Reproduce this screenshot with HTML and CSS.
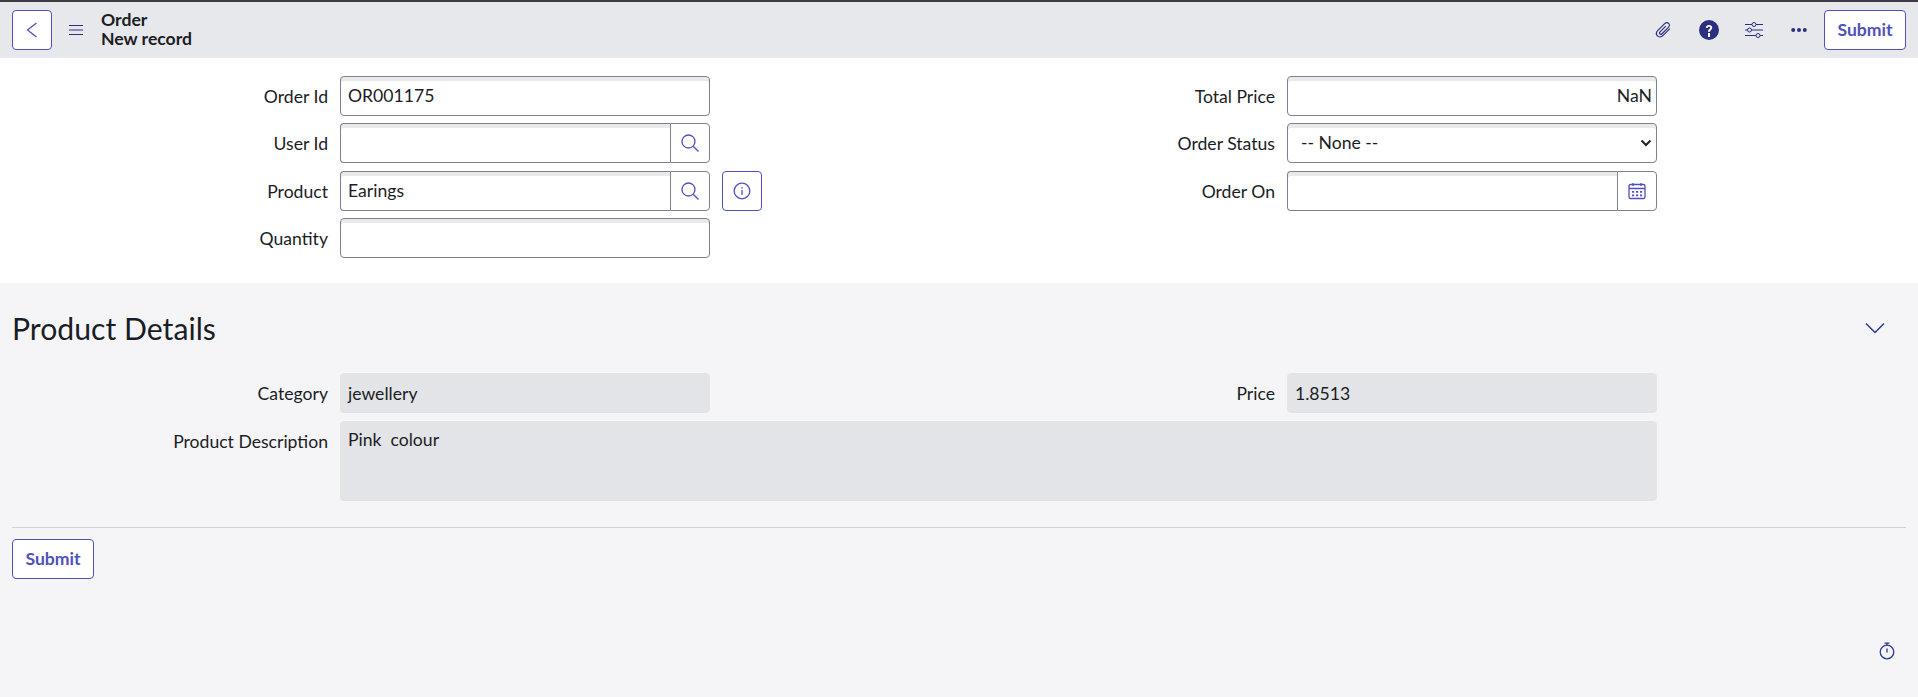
FILE: index.html
```html
<!DOCTYPE html>
<html lang="en">
<head>
<meta charset="utf-8">
<title>Order - New record</title>
<link rel="stylesheet" href="styles.css">
</head>
<body>
<header class="topbar">
  <button class="btn btn-icon" aria-label="Back">
    <svg width="14" height="20" viewBox="0 0 14 20"><path d="M11.500 3 2.500 10l9 7" class="line"/></svg>
  </button>
  <svg class="menu" width="14" height="10" viewBox="0 0 14 10"><path d="M0 .5h14M0 5h14M0 9.500h14" class="line-dark thin"/></svg>
  <div class="title"><div>Order</div><div>New record</div></div>
  <div class="actions">
    <svg class="act act-clip" width="18" height="18" viewBox="0 0 20 20"><path d="M16.500 8.500 9 16c-2 2-4.800 2-6.300.5S1.200 12.500 3.200 10.500L10.800 3c1.400-1.400 3.300-1.400 4.400-.3s1.100 3-.3 4.400L7.800 14.200c-.8.800-1.800.8-2.400.2s-.6-1.600.2-2.400L12 5.600" class="line-dark"/></svg>
    <svg class="act act-help" width="20" height="20" viewBox="0 0 20 20"><circle cx="10" cy="10" r="10" fill="#2c2e7f"/><path d="M6.800 7.700C7 5.900 8.300 5 10 5c1.900 0 3.300 1.100 3.300 2.800 0 2-2.300 2.200-2.300 4H9c0-2.800 2.200-3 2.200-4.100 0-.7-.5-1-1.200-1-.8 0-1.200.5-1.300 1.200z" fill="#fff"/><rect x="9" y="13" width="2" height="4" fill="#fff"/></svg>
    <svg class="act act-sliders" width="18" height="16" viewBox="0 0 18 16"><path d="M0 2.500h7m4 0h7M0 8h2.500m4 0H18M0 13.500h11m4 0h3" class="line-dark thin"/><circle cx="9" cy="2.500" r="2" class="line-dark thin"/><circle cx="4.500" cy="8" r="2" class="line-dark thin"/><circle cx="13" cy="13.500" r="2" class="line-dark thin"/></svg>
    <svg class="act act-more" width="16" height="4" viewBox="0 0 16 4"><circle cx="2.200" cy="2" r="2" fill="#2c2e7f"/><circle cx="8" cy="2" r="2" fill="#2c2e7f"/><circle cx="13.800" cy="2" r="2" fill="#2c2e7f"/></svg>
    <button class="btn btn-text">Submit</button>
  </div>
</header>

<section class="primary">
  <div class="form-grid">
    <div class="col">
      <div class="row"><label class="lbl">Order Id</label><div class="field"><div class="input">OR001175</div></div></div>
      <div class="row"><label class="lbl">User Id</label><div class="field">
        <div class="group"><div class="input"></div><span class="addon"><svg width="20" height="20" viewBox="0 0 20 20"><circle cx="8.500" cy="8.500" r="6.500" class="line"/><path d="m13.200 13.200 5.300 5.300" class="line"/></svg></span></div>
      </div></div>
      <div class="row"><label class="lbl">Product</label><div class="field">
        <div class="group"><div class="input">Earings</div><span class="addon"><svg width="20" height="20" viewBox="0 0 20 20"><circle cx="8.500" cy="8.500" r="6.500" class="line"/><path d="m13.200 13.200 5.300 5.300" class="line"/></svg></span></div>
        <button class="btn btn-icon btn-info" aria-label="Info"><svg width="18" height="18" viewBox="0 0 18 18"><circle cx="9" cy="9" r="7.800" class="line"/><path d="M9 8v5M9 5v1.600" class="line"/></svg></button>
      </div></div>
      <div class="row"><label class="lbl">Quantity</label><div class="field"><div class="input"></div></div></div>
    </div>
    <div class="col">
      <div class="row"><label class="lbl">Total Price</label><div class="field"><div class="input input-right">NaN</div></div></div>
      <div class="row"><label class="lbl">Order Status</label><div class="field">
        <div class="input input-select">-- None --<svg class="caret" width="12" height="8" viewBox="0 0 12 8"><path d="m1.500 1.500 4.500 4.500 4.500-4.500" fill="none" stroke="#222" stroke-width="2"/></svg></div>
      </div></div>
      <div class="row"><label class="lbl">Order On</label><div class="field">
        <div class="group"><div class="input"></div><span class="addon"><svg width="18" height="18" viewBox="0 0 18 18"><rect x="1" y="2.500" width="16" height="14" rx="1.500" class="line"/><path d="M1 6.500h16M5 1v3M13 1v3" class="line"/><path d="M4 9h2.200v1.800H4zM8 9h2.200v1.800H8zM12 9h2.200v1.800H12zM4 12.500h2.200v1.800H4zM8 12.500h2.200v1.800H8zM12 12.500h2.200v1.800H12z" fill="#4f52bd"/></svg></span></div>
      </div></div>
    </div>
  </div>
</section>

<main class="details">
  <div class="section-head">
    <h2>Product Details</h2>
    <svg width="20" height="12" viewBox="0 0 20 12"><path d="m1 1.500 9 9 9-9" fill="none" stroke="#2c3a8f" stroke-width="1.500"/></svg>
  </div>
  <div class="form-grid">
    <div class="col">
      <div class="row"><label class="lbl">Category</label><div class="field"><div class="input readonly">jewellery</div></div></div>
    </div>
    <div class="col">
      <div class="row"><label class="lbl">Price</label><div class="field"><div class="input readonly">1.8513</div></div></div>
    </div>
  </div>
  <div class="row row-wide">
    <label class="lbl">Product Description</label>
    <div class="input readonly textarea">Pink&nbsp; colour</div>
  </div>
  <hr class="divider">
  <button class="btn btn-text">Submit</button>
  <svg class="timer" width="16" height="18" viewBox="0 0 16 18"><circle cx="8" cy="10" r="6.800" fill="none" stroke="#2c3a8f" stroke-width="1.300"/><path d="M5.500 1.200h5M8 1.200v2.200M8 6.500v4" fill="none" stroke="#2c3a8f" stroke-width="1.300"/></svg>
</main>
</body>
</html>
```
FILE: styles.css
```css
* { box-sizing: border-box; }
html, body { margin: 0; padding: 0; height: 100%; overflow: hidden; }
body { font-family: Lato, "Noto Sans", sans-serif; font-size: 17.6px; color: #1a1d24; background: #f5f5f8; }

.line { fill: none; stroke: #4f52bd; stroke-width: 1.300; }
.line-dark { fill: none; stroke: #2c2e7f; stroke-width: 1.300; }
.line-dark.thin { stroke-width: 1; }

.topbar { height: 58px; display: flex; align-items: center; padding: 0 12px; background: #e7e8ec; border-top: 2px solid #3c3b44; }
.menu { margin-left: 17px; }
.title { margin-left: 18px; font-weight: 700; line-height: 19px; margin-top: -3px; }
.actions { margin-left: auto; display: flex; align-items: center; }
.act-clip { margin-right: 26px; }
.act-help { margin-right: 26px; }
.act-sliders { margin-right: 28px; }
.act-more { margin-right: 17px; }

.btn { font: inherit; background: #fff; border: 1px solid #4f52bd; border-radius: 4px; height: 40px; color: #4f52bd; display: inline-flex; align-items: center; justify-content: center; padding: 0 0 2px; }
.btn-icon { width: 40px; padding: 0; }
.btn-text { width: 82px; font-weight: 700; }
.btn-info { margin-left: 12px; flex: none; }

.primary { background: #fff; padding: 18px 12px 0; height: 225px; }
.form-grid { display: grid; grid-template-columns: 947px 947px; }
.row { display: grid; grid-template-columns: 316px 1fr; column-gap: 12px; margin-bottom: 7.400px; align-items: start; }
.lbl { display: block; height: 40px; text-align: right; line-height: 42px; }
.field { display: flex; width: 370px; }
.field .group { width: 370px; flex: none; }

.input { height: 40px; width: 100%; line-height: 38px; padding: 0 7px; background: #fff; border: 1px solid #7c8093; border-radius: 4px; box-shadow: inset 0 4px 0 #e9e9ea; }
.input-right { text-align: right; padding-right: 4px; }
.input-select { position: relative; padding-left: 13px; line-height: 38px; }
.caret { position: absolute; right: 4px; top: 15px; }

.group { display: flex; height: 40px; }
.group .input { flex: 1; min-width: 0; border-radius: 4px 0 0 4px; border-right: 0; }
.addon { width: 40px; flex: none; height: 40px; display: flex; align-items: center; justify-content: center; background: #fff; border: 1px solid #7c8093; border-radius: 0 4px 4px 0; }

.details { position: relative; padding: 0 12px; height: 414px; }
.section-head { height: 90px; display: flex; align-items: center; justify-content: space-between; padding-right: 21px; }
.section-head h2 { margin: 0; font-size: 30.200px; font-weight: 400; }
.details .row { margin-bottom: 8px; }
.details .lbl { line-height: 42px; }
.readonly { background: #e3e4e8; border-color: #e3e4e8; box-shadow: none; line-height: 39px; }
.row-wide { width: 1645px; grid-template-columns: 316px 1317px; }
.textarea { height: 80px; line-height: 22px; padding-top: 7px; }
.divider { border: 0; border-top: 1px solid #cfd0d8; margin: 26px 0 11px; }
.timer { position: absolute; right: 23px; top: 359px; }
```
